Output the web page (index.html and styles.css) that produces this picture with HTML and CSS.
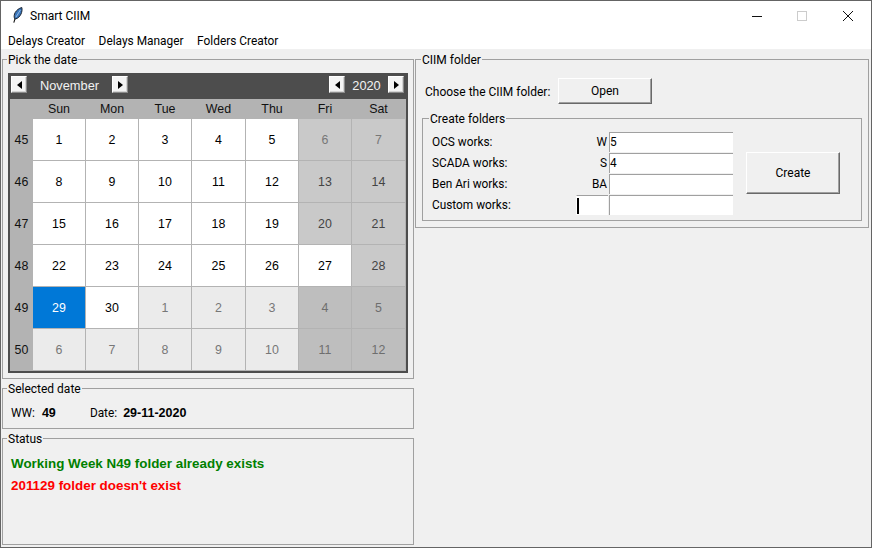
FILE: index.html
```
<!DOCTYPE html>
<html lang="en">
<head>
<meta charset="utf-8">
<title>Smart CIIM</title>
<link rel="stylesheet" href="styles.css">
</head>
<body>
<div class="window">
  <header class="titlebar">
    <svg class="app-icon" width="10" height="16" viewBox="0 0 10 16"><path d="M0.8 15.6 L2.6 10" stroke="#111" stroke-width="1.1" fill="none"/><path d="M1.6 11.6 C0 8 2.6 2.4 8.8 0.5 C9.8 4.4 7.6 10.4 2.8 11.9 Z" fill="#3a76bb" stroke="#18222f" stroke-width="1"/><path d="M3 10 L7.4 3" stroke="#a9cbef" stroke-width="0.8"/></svg>
    <span class="app-title">Smart CIIM</span>
    <div class="win-controls">
      <svg class="win-btn" width="46" height="29" viewBox="0 0 46 29"><path d="M18 15.5 H28" stroke="#111"/></svg>
      <svg class="win-btn" width="46" height="29" viewBox="0 0 46 29"><rect x="17.5" y="10.5" width="9" height="9" fill="none" stroke="#ccc"/></svg>
      <svg class="win-btn" width="46" height="29" viewBox="0 0 46 29"><path d="M17 10 L27 20 M27 10 L17 20" stroke="#111" fill="none"/></svg>
    </div>
  </header>
  <nav class="menubar">
    <span class="menu-item">Delays Creator</span>
    <span class="menu-item">Delays Manager</span>
    <span class="menu-item">Folders Creator</span>
  </nav>
  <main class="content">
    <div class="left-col">
      <fieldset class="frame date-frame">
        <legend>Pick the date</legend>
        <div class="calendar">
          <div class="cal-head">
            <button class="arrow"><span class="tri-left"></span></button>
            <span class="cal-month">November</span>
            <button class="arrow"><span class="tri-right"></span></button>
            <span class="cal-spacer"></span>
            <button class="arrow"><span class="tri-left"></span></button>
            <span class="cal-year">2020</span>
            <button class="arrow"><span class="tri-right"></span></button>
          </div>
          <div class="cal-grid">
            <div class="hd"></div><div class="hd">Sun</div><div class="hd">Mon</div><div class="hd">Tue</div><div class="hd">Wed</div><div class="hd">Thu</div><div class="hd">Fri</div><div class="hd">Sat</div>

            <div class="wk">45</div><div class="d">1</div><div class="d">2</div><div class="d">3</div><div class="d">4</div><div class="d">5</div><div class="d we faint">6</div><div class="d we faint">7</div>
            <div class="wk">46</div><div class="d">8</div><div class="d">9</div><div class="d">10</div><div class="d">11</div><div class="d">12</div><div class="d we">13</div><div class="d we">14</div>
            <div class="wk">47</div><div class="d">15</div><div class="d">16</div><div class="d">17</div><div class="d">18</div><div class="d">19</div><div class="d we">20</div><div class="d we">21</div>
            <div class="wk">48</div><div class="d">22</div><div class="d">23</div><div class="d">24</div><div class="d">25</div><div class="d">26</div><div class="d">27</div><div class="d we">28</div>
            <div class="wk">49</div><div class="d sel">29</div><div class="d">30</div><div class="d oth">1</div><div class="d oth">2</div><div class="d oth">3</div><div class="d oth-we">4</div><div class="d oth-we">5</div>
            <div class="wk">50</div><div class="d oth">6</div><div class="d oth">7</div><div class="d oth">8</div><div class="d oth">9</div><div class="d oth">10</div><div class="d oth-we">11</div><div class="d oth-we">12</div>
          </div>
        </div>
      </fieldset>
      <fieldset class="frame selected-frame">
        <legend>Selected date</legend>
        <div class="selected-row">
          <span class="sel-label ww">WW:</span><b class="sel-val ww-val">49</b>
          <span class="sel-label">Date:</span><b class="sel-val">29-11-2020</b>
        </div>
      </fieldset>
      <fieldset class="frame status-frame">
        <legend>Status</legend>
        <div class="status-body">
          <p class="status ok">Working Week N49 folder already exists</p>
          <p class="status err">201129 folder doesn't exist</p>
        </div>
      </fieldset>
    </div>
    <fieldset class="frame ciim-frame">
      <legend>CIIM folder</legend>
      <div class="choose-row">
        <span class="choose-label">Choose the CIIM folder:</span>
        <button class="btn open-btn">Open</button>
      </div>
      <fieldset class="frame create-frame">
        <legend>Create folders</legend>
        <div class="create-grid">
          <span class="f-label">OCS works:</span><span class="prefix">W</span><span class="entry">5</span>
          <span class="f-label">SCADA works:</span><span class="prefix">S</span><span class="entry">4</span>
          <span class="f-label">Ben Ari works:</span><span class="prefix">BA</span><span class="entry"></span>
          <span class="f-label">Custom works:</span><span class="entry small"><i class="caret"></i></span><span class="entry"></span>
          <button class="btn create-btn">Create</button>
        </div>
      </fieldset>
    </fieldset>
  </main>
</div>
</body>
</html>
```

FILE: styles.css
```
* { box-sizing: border-box; }
html, body { margin: 0; padding: 0; }
body {
  width: 872px;
  height: 548px;
  overflow: hidden;
  font-family: Roboto, "Noto Sans", sans-serif;
  font-size: 11.85px;
  color: #000;
}
.window {
  width: 872px;
  height: 548px;
  border: 1px solid #646464;
  background: #f0f0f0;
  display: flex;
  flex-direction: column;
}
.titlebar {
  height: 29px;
  background: #fff;
  display: flex;
  align-items: center;
  padding-left: 12px;
}
.app-icon { margin-top: -1px; }
.app-title { margin-left: 7px; font-size: 12px; }
.win-controls { margin-left: auto; display: flex; margin-right: -1px; }
.win-btn { display: block; }
.menubar {
  height: 19px;
  background: #fff;
  display: flex;
  align-items: center;
  gap: 13.5px;
  padding-left: 7px;
  padding-top: 2px;
  font-size: 11.9px;
}
.content {
  flex: 1;
  display: flex;
  align-items: flex-start;
  padding: 4px 0 0 1px;
  gap: 1px;
}
.left-col {
  width: 412px;
  display: flex;
  flex-direction: column;
  gap: 3px;
}
.frame {
  margin: 0;
  padding: 0;
  min-width: 0;
  border: 1px solid #a0a0a0;
}
.frame > legend {
  padding: 0 1px;
  margin-left: 4px;
  line-height: 15px;
  height: 13px;
  font-size: 12px;
}
.date-frame { padding-bottom: 5px; }
.calendar {
  width: 400px;
  margin: 7px 0 0 5px;
  border: 2px solid #4d4d4d;
  font-family: "Liberation Sans", Arial, sans-serif;
  font-size: 12.4px;
}
.cal-head {
  height: 24px;
  background: #4d4d4d;
  display: flex;
  align-items: flex-start;
  padding: 1px 2px 0 1px;
  color: #f2f2f2;
}
.arrow {
  width: 16px;
  height: 17px;
  padding: 0;
  background: #f4f4f4;
  border: 1px solid;
  border-color: #fff #8a8a8a #8a8a8a #fff;
  box-shadow: inset -1px -1px 0 #d4d4d4;
  display: flex;
  align-items: center;
  justify-content: center;
}
.tri-left, .tri-right { width: 0; height: 0; border-top: 4px solid transparent; border-bottom: 4px solid transparent; }
.tri-left { border-right: 5px solid #000; }
.tri-right { border-left: 5px solid #000; }
.cal-month { width: 85px; text-align: center; line-height: 19px; font-size: 12.8px; }
.cal-spacer { flex: 1; }
.cal-year { width: 43px; text-align: center; line-height: 19px; font-size: 12.8px; }
.cal-grid {
  display: grid;
  grid-template-columns: 22px 52px 52px 52px 53px 52px 52px 53px;
  grid-template-rows: 19px repeat(6, 41px);
  gap: 1px;
  padding: 0 1px 1px 0;
  background: #b3b3b3;
}
.hd, .wk, .d { display: flex; align-items: center; justify-content: center; }
.hd { background: #b3b3b3; color: #111; }
.wk { background: #b3b3b3; color: #111; padding-left: 1px; }
.d { background: #fff; color: #000; }
.d.we { background: #c9c9c9; color: #444; }
.d.we.faint { color: #777; }
.d.oth { background: #ebebeb; color: #777; }
.d.oth-we { background: #bebebe; color: #6e6e6e; }
.d.sel { background: #0078d7; color: #fff; }
.selected-frame { height: 47px; }
.selected-row { display: flex; align-items: center; padding: 11px 0 0 8px; line-height: 15px; }
.sel-label { margin-right: 6px; }
.sel-label.ww { margin-right: 7px; }
.sel-val { font-family: "Liberation Sans", Arial, sans-serif; font-size: 12.5px; }
.ww-val { width: 48px; }
.status-frame { height: 113px; }
.status-body { padding: 10px 0 0 8px; }
.status {
  margin: 0 0 5px;
  height: 17px;
  line-height: 17px;
  font-family: "Liberation Sans", Arial, sans-serif;
  font-weight: bold;
  font-size: 13.4px;
}
.ok { color: #008000; }
.err { color: #ff0000; }
.ciim-frame { width: 454px; padding-bottom: 6px; }
.ciim-frame > legend { margin-left: 5px; }
.choose-row { display: flex; align-items: center; padding: 12px 0 0 9px; }
.choose-label { width: 133px; padding-top: 1px; font-size: 12px; }
.btn {
  background: #f0f0f0;
  border: 1px solid;
  border-color: #fff #696969 #696969 #fff;
  box-shadow: inset -1px -1px 0 #a0a0a0;
  font-family: inherit;
  font-size: 12px;
  color: #000;
  padding: 0;
}
.open-btn { width: 94px; height: 26px; }
.create-frame { margin: 8px 6px 0; height: 109px; }
.create-frame > legend { margin-left: 6px; }
.create-grid {
  display: grid;
  grid-template-columns: 143px 32px 124px 94px;
  grid-auto-rows: 20px;
  column-gap: 1px;
  row-gap: 1px;
  margin: 7px 0 0 9px;
}
.f-label { line-height: 20px; }
.prefix { text-align: right; padding-right: 1px; line-height: 20px; }
.entry {
  background: #fff;
  border-top: 1px solid #a0a0a0;
  border-left: 1px solid #a0a0a0;
  line-height: 18px;
}
.entry.small { border-left-color: #fff; padding: 2px 0 0 0; }
.caret { display: block; width: 2px; height: 16px; background: #000; }
.create-btn {
  grid-column: 4;
  grid-row: 1 / 5;
  margin: 20px 0 0 12px;
  width: 94px;
  height: 42px;
}
```
